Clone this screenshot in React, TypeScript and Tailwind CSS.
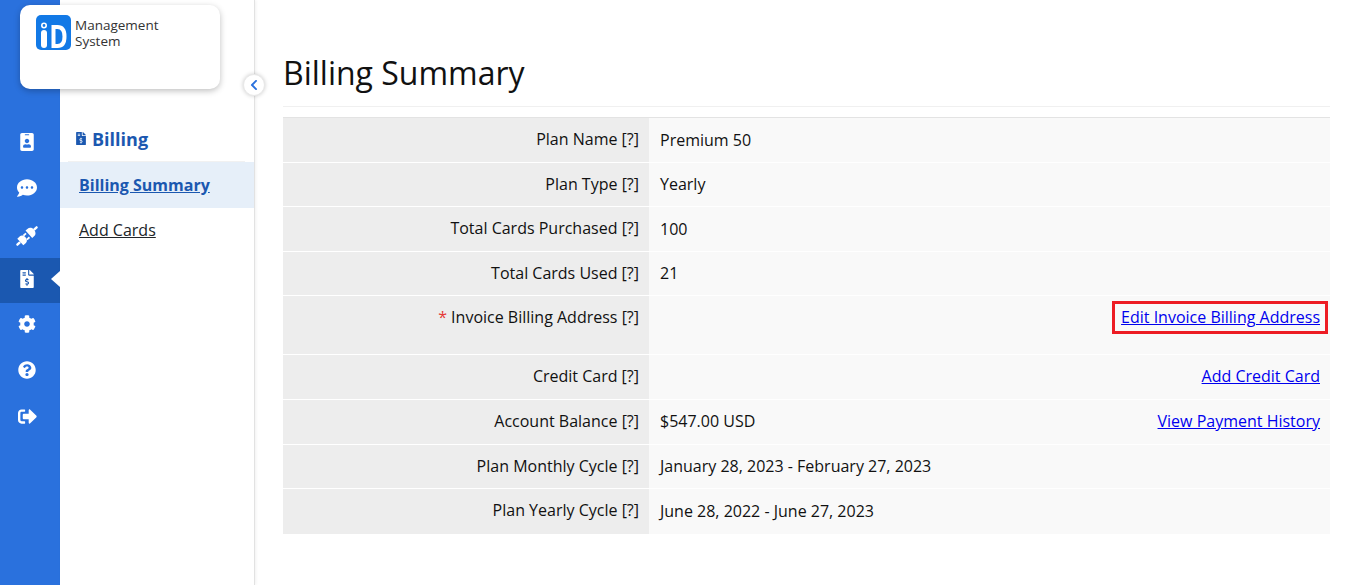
import {
  FaChevronLeft,
  FaCog,
  FaCommentDots,
  FaFileInvoiceDollar,
  FaIdBadge,
  FaQuestionCircle,
  FaSignOutAlt,
} from 'react-icons/fa';

function PlugIcon({ className }: { className?: string }) {
  return (
    <svg viewBox="0 0 24 24" className={className} fill="#fff">
      <g transform="rotate(-42 12 12)">
        <rect x="-2" y="10.800" width="5" height="2.400" rx="1" />
        <path d="M3 7.500h3.500c2 0 3.500 2 3.500 4.500s-1.500 4.500-3.500 4.500H3z" />
        <rect x="9.500" y="8.500" width="3.500" height="1.800" />
        <rect x="9.500" y="13.700" width="3.500" height="1.800" />
        <path d="M14.500 7h2.500c2.800 0 4.500 2.200 4.500 5s-1.700 5-4.500 5h-2.500z" />
        <rect x="21" y="10.800" width="5" height="2.400" rx="1" />
      </g>
    </svg>
  );
}

const railItems = [
  { icon: FaIdBadge, box: 'h-[46px]', size: 'w-[14px] h-[18px]' },
  { icon: FaCommentDots, box: 'h-[46px]', size: 'w-[20px] h-[20px]' },
  { icon: PlugIcon, box: 'h-[47px] pt-[3px]', size: 'w-[24px] h-[24px]' },
  { icon: FaFileInvoiceDollar, box: 'h-[45px] pb-[3px]', size: 'w-[14px] h-[18px]', active: true },
  { icon: FaCog, box: 'h-[46px] pb-[4px]', size: 'w-[18px] h-[18px]' },
  { icon: FaQuestionCircle, box: 'h-[46px] pb-[4px]', size: 'w-[18px] h-[18px]' },
  { icon: FaSignOutAlt, box: 'h-[46px] pb-[4px]', size: 'w-[19px] h-[19px]' },
];

interface RowProps {
  label: string;
  value?: string;
  link?: string;
  required?: boolean;
  boxed?: boolean;
  height: string;
  valuePad?: string;
}

const rows: RowProps[] = [
  { label: 'Plan Name [?]', value: 'Premium 50', height: 'h-[45px]', valuePad: 'pt-[10px]' },
  { label: 'Plan Type [?]', value: 'Yearly', height: 'h-[44px]' },
  { label: 'Total Cards Purchased [?]', value: '100', height: 'h-[45px]', valuePad: 'pt-[10px]' },
  { label: 'Total Cards Used [?]', value: '21', height: 'h-[44px]' },
  { label: 'Invoice Billing Address [?]', link: 'Edit Invoice Billing Address', required: true, boxed: true, height: 'h-[59px]' },
  { label: 'Credit Card [?]', link: 'Add Credit Card', height: 'h-[45px]' },
  { label: 'Account Balance [?]', value: '$547.00 USD', link: 'View Payment History', height: 'h-[45px]' },
  { label: 'Plan Monthly Cycle [?]', value: 'January 28, 2023 - February 27, 2023', height: 'h-[44px]' },
  { label: 'Plan Yearly Cycle [?]', value: 'June 28, 2022 - June 27, 2023', height: 'h-[45px]', valuePad: 'pt-[10px]' },
];

function Row({ label, value, link, required, boxed, height, valuePad = 'pt-[9px]' }: RowProps) {
  return (
    <div className={`flex border-b border-white last:border-b-0 ${height}`}>
      <div className="w-[366px] shrink-0 bg-[#ededed] pt-[9px] pr-[10px] text-right">
        {required && <span className="text-[#e53935]">* </span>}
        {label}
      </div>
      <div className={`relative flex flex-1 items-start justify-between bg-[#f9f9f9] pr-[10px] pl-[11px] ${valuePad}`}>
        <span>{value}</span>
        {link && (
          <a href="#" className="text-[#0000ee] underline">
            {link}
          </a>
        )}
        {boxed && (
          <div className="pointer-events-none absolute top-[5px] right-[2px] h-[33px] w-[216px] border-[3px] border-[#ed1c24]" />
        )}
      </div>
    </div>
  );
}

export default function App() {
  return (
    <div className="relative flex h-[585px] w-[1357px] overflow-hidden bg-white font-['Open_Sans',sans-serif] text-[16px] leading-[24px] text-[#111]">
      <aside className="w-[60px] shrink-0 bg-[#2a71dd] pt-[119px]">
        {railItems.map(({ icon: Icon, box, size, active }, i) => (
          <div key={i} className={`relative flex items-center justify-center pr-[6px] ${box} ${active ? 'bg-[#1b58b0]' : ''}`}>
            <Icon className={`${size} text-white`} />
            {active && (
              <span className="absolute top-[13px] right-0 border-y-[8px] border-r-[9px] border-y-transparent border-r-white" />
            )}
          </div>
        ))}
      </aside>

      <nav className="relative w-[195px] shrink-0 border-r border-[#e2e2e2] pt-[121px] shadow-[1px_0_3px_rgba(0,0,0,0.06)]">
        <div className="ml-[8px] mr-[9px] flex h-[41px] items-center gap-[6px] border-b border-[#f1f1f1] pb-[5px] pl-[8px] text-[18px] font-bold text-[#1b58b0]">
          <FaFileInvoiceDollar className="h-[13px] w-[10px]" />
          Billing
        </div>
        <a href="#" className="flex h-[46px] items-center bg-[#e6eff9] pl-[19px] font-bold text-[#1b58b0] underline">
          Billing Summary
        </a>
        <a href="#" className="flex h-[44px] items-center pl-[19px] text-[#212529] underline">
          Add Cards
        </a>
        <button className="absolute top-[74px] right-[-11px] flex h-[22px] w-[22px] items-center justify-center rounded-full border border-[#e8e8e8] bg-white text-[#2a71dd] shadow-[0_0_4px_rgba(0,0,0,0.2)]">
          <FaChevronLeft className="h-[12px] w-[12px]" />
        </button>
      </nav>

      <div className="absolute top-[5px] left-[20px] h-[84px] w-[200px] rounded-[10px] bg-white pt-[10px] pl-[16px] shadow-[0_2px_6px_rgba(0,0,0,0.25)]">
        <div className="flex items-start gap-[4px]">
          <div className="flex h-[35px] w-[35px] items-center justify-center rounded-[5px] bg-[#1279e6]">
            <svg viewBox="0 0 35 35" className="h-[35px] w-[35px]" fill="none">
              <circle cx="8" cy="10.500" r="2.200" stroke="#fff" strokeWidth="1.600" />
              <rect x="5" y="15" width="6" height="18" rx="3" fill="#fff" />
              <path d="M17.500 12h4c5 0 7 4 7 9.500s-2 9.500-7 9.500h-4z" stroke="#fff" strokeWidth="4" />
            </svg>
          </div>
          <div className="pt-[2px] text-[13.5px] leading-[16px] text-[#333]">
            Management
            <br />
            System
          </div>
        </div>
      </div>

      <main className="flex-1 pt-[48px] pr-[27px] pl-[28px]">
        <h1 className="h-[59px] border-b border-[#f0f0f0] text-[32px] leading-[50px] text-[#111]">Billing Summary</h1>
        <div className="mt-[10px] border-t border-[#e3e3e3]">
          {rows.map((row) => (
            <Row key={row.label} {...row} />
          ))}
        </div>
      </main>
    </div>
  );
}
